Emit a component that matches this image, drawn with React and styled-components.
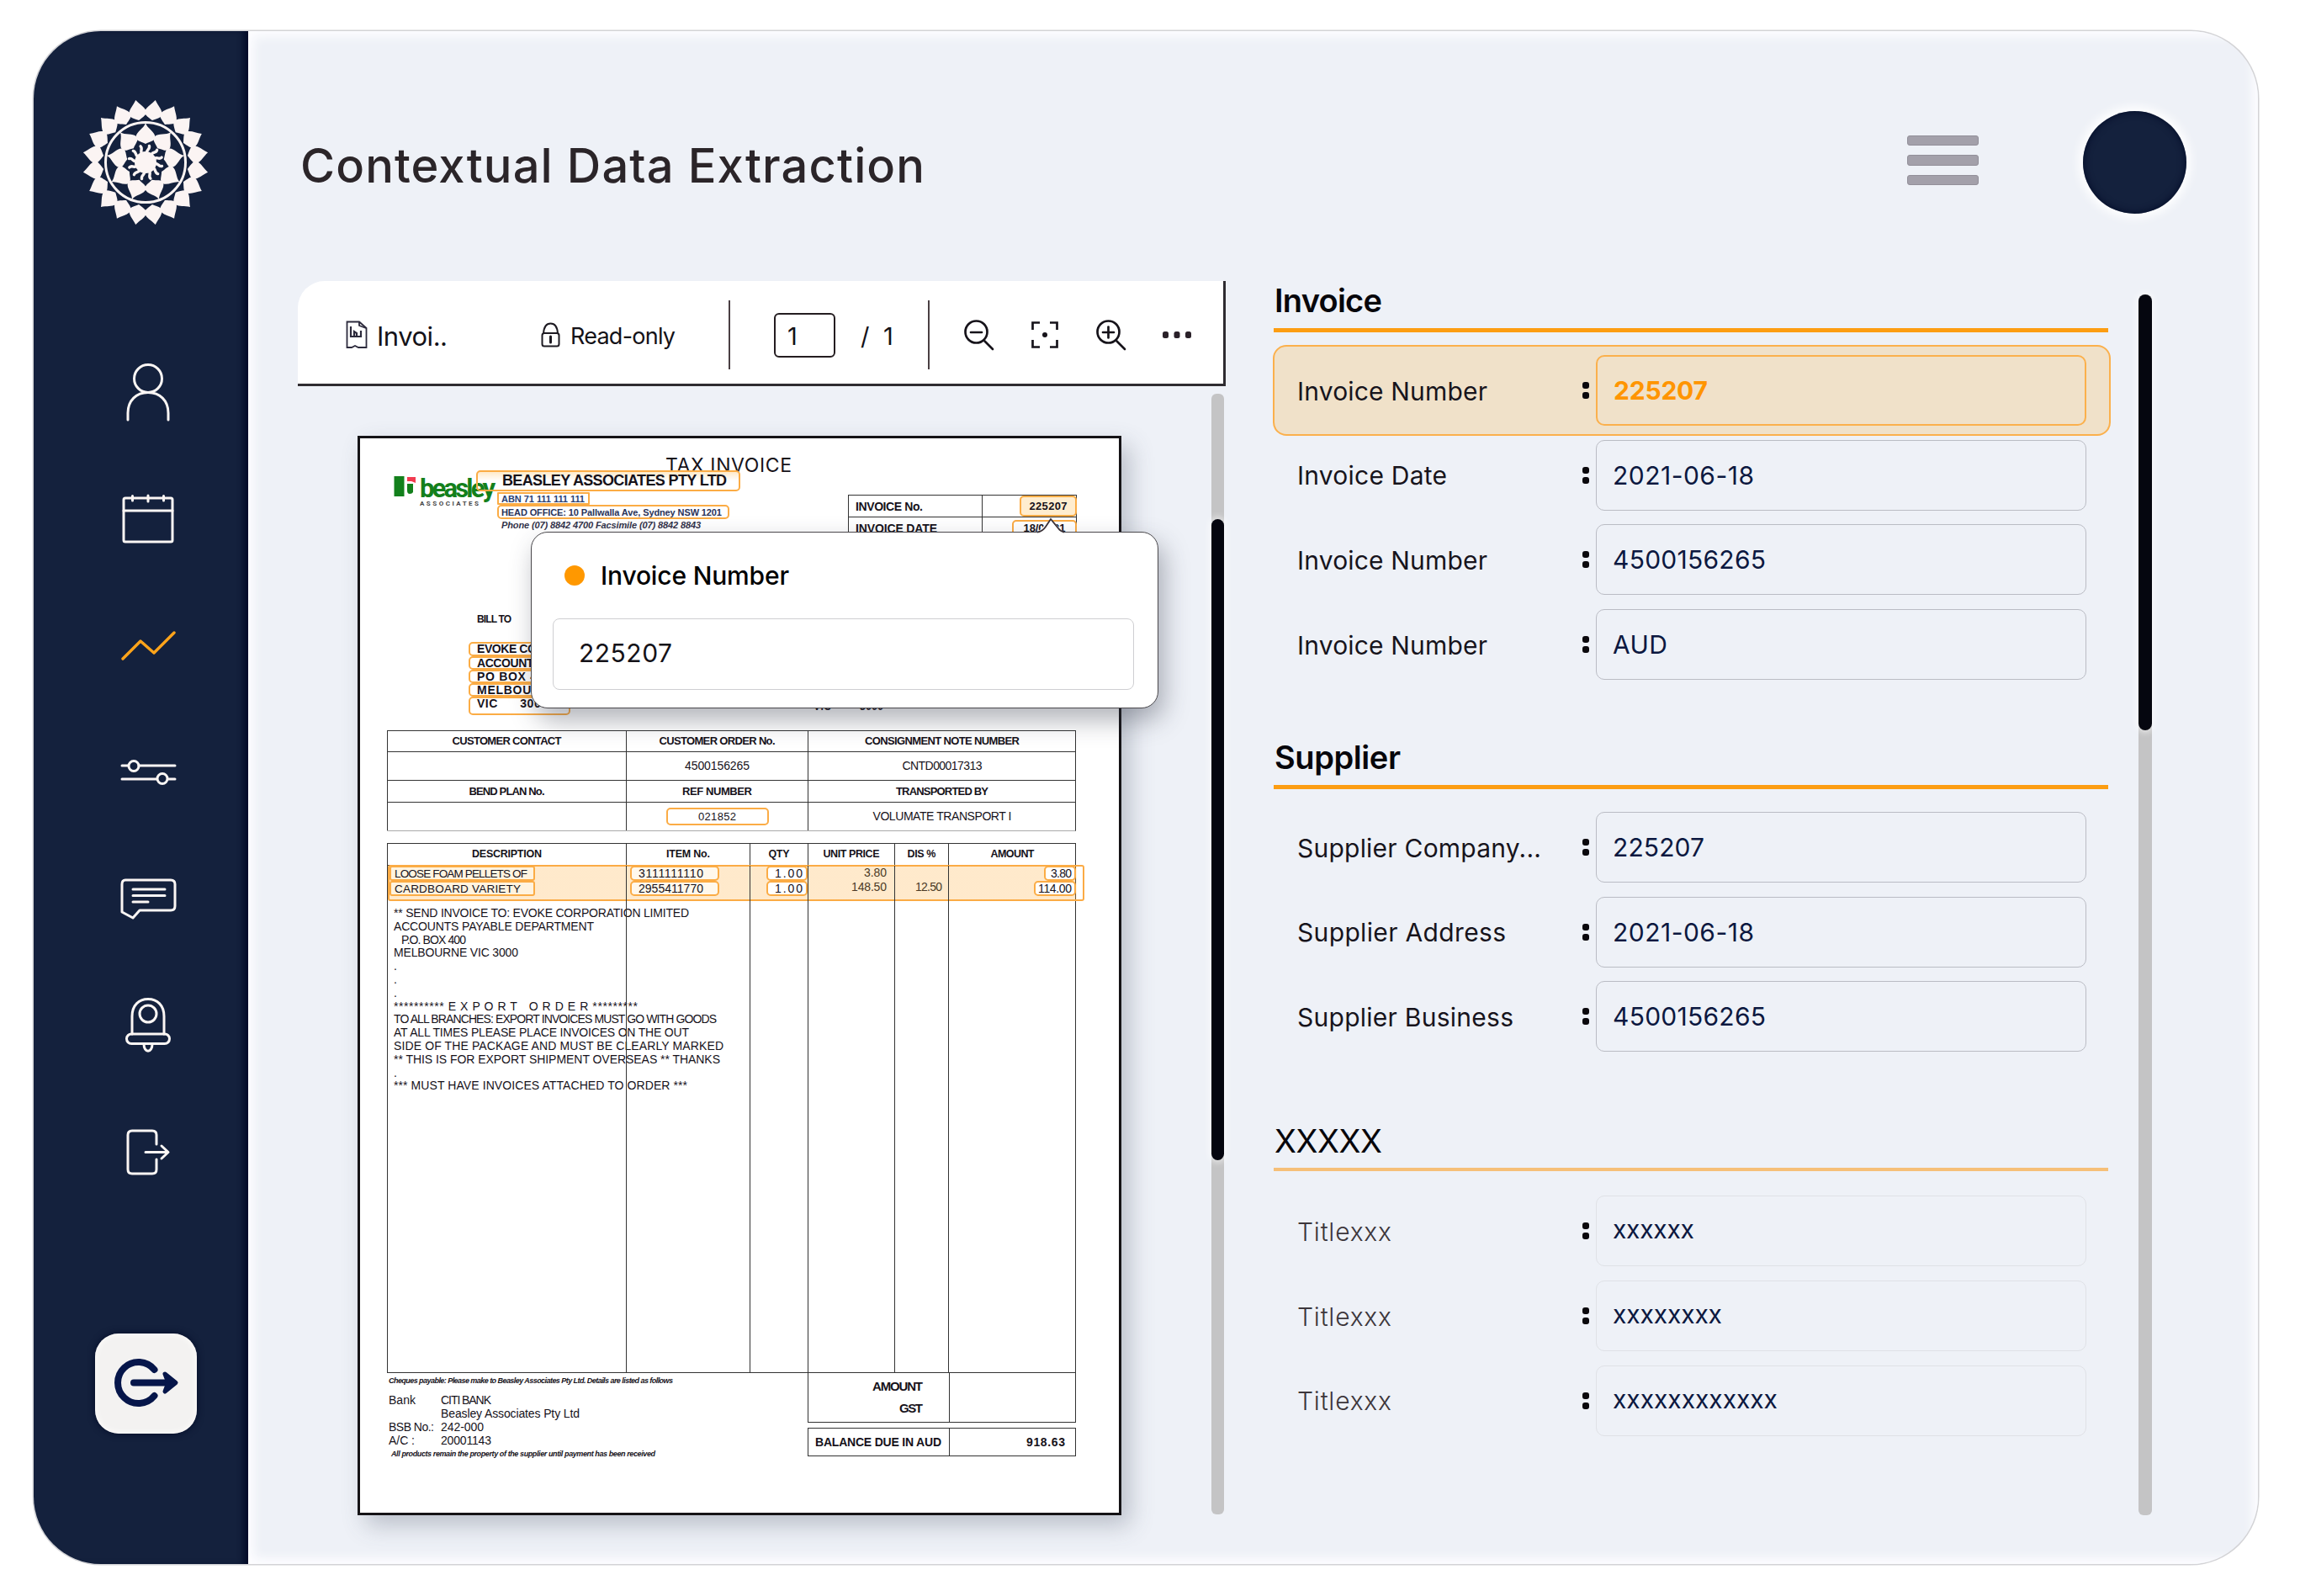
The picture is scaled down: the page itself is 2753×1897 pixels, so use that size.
import React, { useLayoutEffect, useRef, useState } from "react";
import styled, { createGlobalStyle, css } from "styled-components";

const NAVY = "#14213d";
const ORANGE = "#fc9d12";
const INK = "#141218";

const GlobalStyle = createGlobalStyle`
  * { box-sizing: border-box; }
  body { margin: 0; background: #fff; font-family: Inter, "Liberation Sans", sans-serif; color: ${INK}; }
  svg { display: block; overflow: visible; flex: none; }
`;

/* Text spread over a given width by letter spacing. */
const FitSpan = styled.span`
  display: inline-block;
  white-space: pre;
`;

function Fit({ w, children }) {
  const ref = useRef(null);
  const [gap, setGap] = useState(0);
  useLayoutEffect(() => {
    const el = ref.current;
    el.style.letterSpacing = "0px";
    const natural = el.getBoundingClientRect().width;
    const next = (w - natural) / Math.max(1, children.length - 1);
    el.style.letterSpacing = `${next}px`;
    setGap(next);
  }, [w, children]);
  return (
    <FitSpan ref={ref} style={{ letterSpacing: gap, marginRight: -gap }}>
      {children}
    </FitSpan>
  );
}

/* ---------- frame ---------- */
const Frame = styled.div`
  display: flex;
  width: 2644px;
  height: 1822px;
  margin: 37px 0 38px 40px;
  border-radius: 80px;
  overflow: hidden;
  background: #eef1f7;
  box-shadow: 0 0 0 1.5px #d3d3d6;
`;

const Sidebar = styled.aside`
  width: 255px;
  flex: none;
  background: ${NAVY};
  box-shadow: inset -8px 0 8px -3px #020a26;
  display: flex;
  flex-direction: column;
  padding-top: 82px;
`;

const LogoSlot = styled.div`
  height: 148px;
  padding-left: 59px;
`;

const Nav = styled.nav`
  display: flex;
  flex-direction: column;
  margin-top: 125px;
`;

const NavItem = styled.div`
  height: 150.4px;
  display: flex;
  align-items: center;
  padding-left: 100px;
`;

const ExitButton = styled.div`
  width: 121px;
  height: 119px;
  margin: 140px 0 0 73px;
  border-radius: 28px;
  background: #f3f2f1;
  box-shadow: inset 0 0 8px #fffdfb, 0 0 8px #040c28;
  display: flex;
  align-items: center;
  justify-content: center;
`;

const Main = styled.main`
  flex: 1;
  padding-left: 59px;
  box-shadow: inset 0 0 12px 7px #fdfdff;
`;

const Header = styled.header`
  height: 297px;
  padding-top: 14px;
  display: flex;
  align-items: center;
`;

const Title = styled.h1`
  margin: 0;
  padding: 8px 0 0 3px;
  width: 1913px;
  font-size: 56px;
  font-weight: 500;
  line-height: 70px;
  color: #2b2529;
`;

const Burger = styled.div`
  display: flex;
  flex-direction: column;
  gap: 11px;
  width: 85px;
  margin-top: -4px;
`;

const Bar = styled.i`
  height: 12.5px;
  border-radius: 3px;
  background: #a3a0aa;
  border: 1px solid #928f99;
`;

const Avatar = styled.div`
  width: 123px;
  height: 122px;
  margin-left: 124px;
  border-radius: 50%;
  background: ${NAVY};
  box-shadow: inset 0 0 10px #020a26, 0 0 12px 5px #fff;
`;

const Body = styled.div`
  display: flex;
  align-items: flex-start;
`;

/* ---------- viewer ---------- */
const Viewer = styled.section`
  width: 1103px;
  flex: none;
`;

const Toolbar = styled.div`
  height: 125px;
  display: flex;
  align-items: center;
  padding: 6px 0 0 57px;
  background: #fff;
  border-right: 3px solid #2f2c31;
  border-bottom: 3px solid #2f2c31;
  border-top-left-radius: 32px;
`;

const Tool = styled.div`
  display: flex;
  align-items: center;
  flex: none;
  gap: ${(p) => p.$gap || 0}px;
  width: ${(p) => p.$w}px;
  margin-left: ${(p) => p.$ml || 0}px;
`;

const ToolText = styled.div`
  padding-top: 3px;
  font-size: ${(p) => p.$size || 29}px;
  line-height: 36px;
`;

const Divider = styled.i`
  width: 2px;
  height: 82px;
  flex: none;
  margin-left: ${(p) => p.$ml}px;
  background: #4a3f43;
`;

const PageBox = styled.div`
  width: 73px;
  height: 53px;
  flex: none;
  margin-left: 52px;
  padding-left: 14px;
  border: 2px solid #241d20;
  border-radius: 6px;
  font-size: 29px;
  line-height: 52px;
`;

const Desk = styled.div`
  display: flex;
  align-items: flex-start;
`;

const Track = styled.div`
  width: ${(p) => p.$w}px;
  height: ${(p) => p.$h}px;
  flex: none;
  margin: ${(p) => p.$m};
  padding-top: ${(p) => p.$offset || 0}px;
  border-radius: 6px;
  background: #c4c4c5;
`;

const Thumb = styled.div`
  height: ${(p) => p.$h}px;
  border-radius: 8px;
  background: #05060f;
  box-shadow: 0 0 8px 2px rgba(255, 255, 255, 0.7);
`;

/* ---------- document ---------- */
const Paper = styled.article`
  position: relative;
  width: 908px;
  height: 1283px;
  margin: 59px 0 0 71px;
  padding: 20px 51px 0 32px;
  flex: none;
  border: 3px solid #151316;
  background: #fff;
  box-shadow: 10px 12px 26px rgba(70, 80, 100, 0.3);
  font-family: "Liberation Sans", sans-serif;
  font-size: 14px;
  color: #16121a;
`;

const DocTitle = styled.div`
  padding-left: 331px;
  height: 18px;
  font-family: Inter, sans-serif;
  font-size: 23px;
  line-height: 25px;
`;

const Letterhead = styled.div`
  display: flex;
  align-items: flex-start;
  height: 167px;
`;

const Brand = styled.div`
  width: 106px;
  padding: 6px 0 0 8px;
  display: flex;
  flex: none;
  white-space: nowrap;
`;

const BrandText = styled.div`
  padding-left: 3px;
  font-family: "Liberation Sans Narrow", Roboto, sans-serif;
  font-size: 31px;
  font-weight: 700;
  line-height: 31px;
  color: #13801c;
`;

const BrandSub = styled.div`
  margin-top: -2px;
  font-size: 8px;
  line-height: 9px;
  font-weight: 700;
  color: #444;
`;

const Company = styled.div`
  position: relative;
  width: 314px;
  flex: none;
`;

const Chip = styled.div`
  width: ${(p) => p.$w}px;
  height: ${(p) => p.$h || 17}px;
  margin: ${(p) => p.$m || 0};
  padding: 0 ${(p) => p.$pr || 0}px 0 ${(p) => p.$pl || 0}px;
  display: flex;
  align-items: ${(p) => (p.$top ? "flex-start" : "center")};
  line-height: ${(p) => (p.$top ? "13px" : "normal")};
  justify-content: ${(p) => p.$align || "flex-start"};
  border: 2px solid #fbac45;
  border-radius: ${(p) => p.$r || 5}px;
  background: ${(p) => p.$bg || "transparent"};
  color: ${(p) => p.$color || "inherit"};
  font-size: ${(p) => p.$size || 14}px;
  font-weight: ${(p) => p.$weight || 400};
`;

const SmallLine = styled.div`
  padding-left: 30px;
  margin-top: 1px;
  font-size: 11px;
  line-height: 13px;
  font-style: italic;
  font-weight: 700;
  color: #33334a;
`;

const Meta = styled.div`
  margin: 29px -1px 0 auto;
  width: 272px;
  display: grid;
  grid-template-columns: 159px 113px;
  grid-auto-rows: 26px;
  border-right: 1px solid #333;
  border-top: 1px solid #333;
`;

const MetaCell = styled.div`
  display: flex;
  align-items: center;
  justify-content: ${(p) => (p.$end ? "flex-end" : "flex-start")};
  padding-left: ${(p) => (p.$end ? 0 : 8)}px;
  border-left: 1px solid #333;
  border-bottom: 1px solid #333;
  font-weight: 700;
`;

const BillRow = styled.div`
  display: flex;
  height: 142px;
  padding-left: 97px;
`;

const BillTo = styled.div`
  width: 410px;
  flex: none;
  font-weight: 700;
`;

const BillLabel = styled.div`
  padding-left: 10px;
  height: 37px;
  font-size: 12px;
  line-height: 20px;
  font-weight: 700;
`;

const DeliverTo = styled.div`
  padding-top: 106px;
  line-height: 16px;
  font-weight: 700;
  font-size: 12px;
`;

const RefTable = styled.div`
  display: grid;
  grid-template-columns: 284px 216px 319px;
  grid-template-rows: 25px 34px 26px 34px;
  width: 819px;
  border-right: 1px solid #333;
  border-bottom: 1px solid #aaa;
`;

const RefCell = styled.div`
  display: flex;
  align-items: center;
  justify-content: center;
  padding-bottom: 1px;
  border-left: 1px solid #333;
  border-top: 1px solid #333;
  font-size: ${(p) => (p.$head ? 13 : 14)}px;
  font-weight: ${(p) => (p.$head ? 700 : 400)};
`;

const columns = css`
  display: grid;
  grid-template-columns: 284px 147px 69px 103px 64px 152px;
  width: 819px;
  border-right: 1px solid #333;
  border-top: 1px solid #333;
`;

const ItemHead = styled.div`
  ${columns}
  margin-top: 14px;
  height: 26px;
`;

const ItemHeadCell = styled.div`
  display: flex;
  align-items: center;
  justify-content: center;
  padding-bottom: 1px;
  border-left: 1px solid #333;
  font-size: 12.5px;
  font-weight: 700;
`;

const ItemBody = styled.div`
  ${columns}
  position: relative;
  height: 604px;
  border-bottom: 1px solid #333;
`;

const Band = styled.div`
  position: absolute;
  left: 1px;
  top: -1px;
  width: 828px;
  height: 43px;
  border: 2px solid #fbab45;
  border-radius: 3px;
  background: linear-gradient(90deg, rgba(255, 178, 70, 0.28) 816px, #fff 817px);
`;

const ItemCol = styled.div`
  position: relative;
  border-left: 1px solid #333;
  padding: 0 ${(p) => p.$pr || 0}px 0 ${(p) => p.$pl || 0}px;
  display: flex;
  flex-direction: column;
  align-items: ${(p) => (p.$end ? "flex-end" : "flex-start")};
`;

const Plain = styled.div`
  height: 17px;
  line-height: 17px;
  color: #4b3a26;
`;

const Notes = styled.div`
  padding: 13px 0 0 5px;
`;

const Note = styled.div`
  height: 15.8px;
  line-height: 15.8px;
  padding-left: ${(p) => p.$pl || 0}px;
`;

const Foot = styled.div`
  display: flex;
  justify-content: space-between;
`;

const Pay = styled.div`
  padding: 4px 0 0 2px;
`;

const PayRow = styled.div`
  display: grid;
  grid-template-columns: 62px auto;
  justify-items: start;
  height: 16px;
  line-height: 16px;
`;

const Tiny = styled.div`
  font-size: 9px;
  line-height: 10px;
  height: ${(p) => p.$h}px;
  padding: ${(p) => p.$pt || 0}px 0 0 ${(p) => p.$pl || 0}px;
  font-style: italic;
  font-weight: 700;
`;

const Totals = styled.div`
  width: 319px;
`;

const TotalBox = styled.div`
  display: grid;
  grid-template-columns: 167px 150px;
  height: ${(p) => p.$h}px;
  margin-top: ${(p) => p.$mt || 0}px;
  border: 1px solid #333;
  border-top-width: ${(p) => (p.$open ? 0 : 1)}px;
  font-weight: 700;
  font-size: ${(p) => (p.$open ? 15 : 14)}px;
`;

const TotalCell = styled.div`
  display: flex;
  flex-direction: column;
  align-items: flex-end;
  justify-content: center;
  gap: 9px;
  padding: 0 ${(p) => p.$pr}px 1px 0;
  border-left: ${(p) => (p.$line ? "1px solid #333" : "0")};
`;

/* ---------- popup ---------- */
const Popup = styled.div`
  position: absolute;
  left: 203px;
  top: 111px;
  width: 746px;
  height: 210px;
  padding: 0 25px;
  border: 1.5px solid #4a484c;
  border-radius: 20px;
  background: #fff;
  box-shadow: 6px 14px 30px rgba(50, 55, 70, 0.38);
  font-family: Inter, sans-serif;
  color: ${INK};
`;

const Caret = styled.svg`
  position: absolute;
  left: 600px;
  top: -18px;
`;

const PopupHead = styled.div`
  display: flex;
  align-items: center;
  height: 102px;
  font-size: 30px;
  font-weight: 500;
  color: #000;
`;

const Dot = styled.i`
  width: 24px;
  height: 24px;
  margin: 0 19px 0 14px;
  border-radius: 50%;
  background: #ff9800;
`;

const PopupInput = styled.div`
  width: 691px;
  height: 85px;
  padding-left: 30px;
  border: 1.5px solid #cfcfd2;
  border-radius: 8px;
  font-size: 30px;
  line-height: 80px;
`;

/* ---------- fields ---------- */
const Panel = styled.section`
  width: 996px;
  flex: none;
  margin-left: 56px;
`;

const Group = styled.div`
  margin-top: ${(p) => p.$mt}px;
`;

const GroupTitle = styled.h2`
  margin: 0;
  padding-left: 2px;
  font-size: 38px;
  font-weight: ${(p) => (p.$faded ? 400 : 600)};
  line-height: 47px;
  color: #07060b;
`;

const Rule = styled.div`
  height: ${(p) => (p.$faded ? 4 : 5)}px;
  margin: ${(p) => (p.$faded ? 8 : 9)}px 3px 0 1px;
  background: ${(p) => (p.$faded ? "#f6bf78" : ORANGE)};
`;

const Rows = styled.div`
  display: flex;
  flex-direction: column;
  gap: 16.7px;
  padding-top: ${(p) => (p.$faded ? 29 : 27)}px;
`;

const Row = styled.div`
  display: flex;
  align-items: center;
  height: 84px;
  padding-left: 29px;
  border: 0 solid #fbb04c;
  ${(p) =>
    p.$active &&
    css`
      height: 108px;
      margin: -12px 0;
      padding-left: 27px;
      border-width: 2px;
      border-radius: 16px;
      background: #f0e1c9;
    `}
`;

const Label = styled.div`
  width: 339px;
  padding-top: 1px;
  font-size: 30px;
  font-weight: ${(p) => (p.$faded ? 300 : 400)};
  color: ${(p) => (p.$faded ? "#3c363b" : "#17141c")};
`;

const Colon = styled.div`
  width: 16px;
  display: flex;
  flex-direction: column;
  gap: 4px;
  &::before,
  &::after {
    content: "";
    width: 8px;
    height: 8px;
    border-radius: 3px;
    background: #0b090d;
  }
`;

const Value = styled.div`
  width: 583px;
  height: 84px;
  padding-left: 19px;
  border: ${(p) => (p.$active ? 2.5 : 1.5)}px solid ${(p) => (p.$active ? "#fbb04c" : p.$faded ? "#dfe1e6" : "#babcc4")};
  border-radius: 10px;
  font-size: 30px;
  font-weight: ${(p) => (p.$active ? 700 : 400)};
  line-height: ${(p) => (p.$faded ? 79 : p.$active ? 80 : 82)}px;
  color: ${(p) => (p.$active ? "#ff9500" : "#0c1840")};
`;

/* ---------- icons ---------- */
const spin = (count, offset) => Array.from({ length: count }, (_, i) => offset + (360 / count) * i);

function Mandala() {
  return (
    <svg width="148" height="148" viewBox="-74 -74 148 148" fill="#fbf4f3">
      {spin(20, 9).map((a) => (
        <path key={a} transform={`rotate(${a})`} d="M0-75C4-69 9-66 10.500-60C11-56 6-54 0-50.500C-6-54-11-56-10.500-60C-9-66-4-69 0-75Z" />
      ))}
      <circle r="47.500" fill="none" stroke="#fbf4f3" strokeWidth="3" />
      {spin(9, 0).map((a) => (
        <path key={a} transform={`rotate(${a})`} d="M0-47C2-40 11-37 11.500-30C11-25 5-25 0-22C-5-25-11-25-11.500-30C-11-37-2-40 0-47Z" />
      ))}
      <circle r="13" />
      {spin(12, 10).map((a) => (
        <path key={a} transform={`rotate(${a})`} d="M0-11C-3-14 3-16 1-20" fill="none" stroke="#fbf4f3" strokeWidth="3.4" strokeLinecap="round" />
      ))}
    </svg>
  );
}

const NavSvg = ({ children, color = "#fbf6f4", w = 3 }) => (
  <svg width="72" height="72" viewBox="0 0 72 72" fill="none" stroke={color} strokeWidth={w} strokeLinecap="round" strokeLinejoin="round">
    {children}
  </svg>
);

const navIcons = [
  <NavSvg key="user">
    <circle cx="36" cy="19" r="16.5" />
    <path d="M12 68V60C12 45 22 35.500 36 35.500S60 45 60 60V68" />
  </NavSvg>,
  <NavSvg key="calendar">
    <rect x="7" y="10" width="58" height="52" rx="2" />
    <path d="M7 25H65M17.500 7.500V13M36 7V14M54.500 7.500V13" />
  </NavSvg>,
  <NavSvg key="trend" color="#ffa41a" w={3.4}>
    <path d="M6 51L27 30L43 44L67 20" />
  </NavSvg>,
  <NavSvg key="sliders">
    <path d="M5 28H12.500M25 28H68M5 44H46M60 44H68" />
    <circle cx="19" cy="28.500" r="6" />
    <circle cx="53" cy="43.500" r="6" />
  </NavSvg>,
  <NavSvg key="message">
    <path d="M9 13H63Q68 13 68 18V44Q68 49 63 49H26L18 58L5 51V18Q5 13 9 13Z" />
    <path d="M18 24H56M18 31.500H56M18 39H36" />
  </NavSvg>,
  <NavSvg key="bell">
    <path d="M17 46V25C17 12 25 4.500 36 4.500S55 12 55 25V46" />
    <circle cx="36" cy="22" r="10" />
    <rect x="10.500" y="46" width="51" height="11.500" rx="5.700" />
    <path d="M31 58C31 69 41 69 41 58" />
  </NavSvg>,
  <NavSvg key="leave">
    <path d="M46 26V15Q46 10 41 10H17Q12 10 12 15V56Q12 61 17 61H41Q46 61 46 56V44" />
    <path d="M33 35.500H59M52 28L60 35.500L52 43" />
  </NavSvg>,
];

const ExitIcon = () => (
  <svg width="80" height="60" viewBox="0 0 80 60" fill="none" stroke="#06164a" strokeWidth="8" strokeLinecap="round">
    <path d="M49.500 14A24.500 24.500 0 1 0 49.500 45" />
    <path d="M25 29.500H66" />
    <path d="M62 19L75 29.500L62 40L66 29.500Z" fill="#06164a" strokeWidth="5" strokeLinejoin="round" />
  </svg>
);

const FileIcon = () => (
  <svg width="26" height="34" viewBox="0 0 26 34" fill="none" stroke="#2c2a3c" strokeWidth="1.8">
    <path d="M1.500 1.500H16L24.500 9V32H15L11 30L7 32H1.500Z" />
    <path d="M16 1.500V6L24 9" />
    <path d="M6 7V19H18V12M10 18V13L13 15V18" strokeWidth="2.200" />
  </svg>
);

const LockIcon = () => (
  <svg width="23" height="30" viewBox="0 0 23 30" fill="none" stroke="#1d1a22" strokeWidth="2">
    <path d="M3 13.500C3.500 5 7 1.500 11.500 1.500S19.500 5 20 13.500" />
    <rect x="1.500" y="13" width="20" height="15.500" rx="2.500" />
    <path d="M11.500 17V24" strokeWidth="3" strokeLinecap="round" />
  </svg>
);

const ZoomIcon = ({ plus }) => (
  <svg width="36" height="36" viewBox="0 0 36 36" fill="none" stroke="#16131a" strokeWidth="2.700" strokeLinecap="round">
    <circle cx="14.500" cy="14.500" r="13" />
    <path d="M8 15H21M24.500 25.500L34 35" />
    {plus && <path d="M14.500 8.500V21.500" />}
  </svg>
);

const FocusIcon = () => (
  <svg width="32" height="32" viewBox="0 0 32 32" fill="none" stroke="#16131a" strokeWidth="2.700">
    <path d="M1.500 10V1.500H10M22 1.500H30.500V10M30.500 22V30.500H22M10 30.500H1.500V22" />
    <circle cx="16" cy="16" r="3" fill="#16131a" stroke="none" />
  </svg>
);

const MoreIcon = () => (
  <svg width="34" height="8" viewBox="0 0 34 8" fill="#2a2129">
    <rect width="7" height="8" rx="2.500" />
    <rect x="13.500" width="7" height="8" rx="2.500" />
    <rect x="27" width="7" height="8" rx="2.500" />
  </svg>
);

const BrandMark = () => (
  <svg width="28" height="26" viewBox="0 0 28 26">
    <rect x="0.500" y="1" width="12" height="24" fill="#13801c" />
    <path d="M16 2H26V9L21 7H16Z" fill="#f23b50" />
    <path d="M16 10H23V20Q22 22 19 22Q16 22 16 18Z" fill="#13801c" />
  </svg>
);

/* ---------- data ---------- */
const groups = [
  {
    title: "Invoice", tw: 128, mt: 0,
    rows: [
      { label: "Invoice Number", lw: 226, value: "225207", vw: 112, active: true },
      { label: "Invoice Date", lw: 178, value: "2021-06-18", vw: 168 },
      { label: "Invoice Number", lw: 226, value: "4500156265", vw: 182 },
      { label: "Invoice Number", lw: 226, value: "AUD", vw: 65 },
    ],
  },
  {
    title: "Supplier", tw: 150, mt: 69,
    rows: [
      { label: "Supplier Company...", lw: 290, value: "225207", vw: 109 },
      { label: "Supplier Address", lw: 248, value: "2021-06-18", vw: 168 },
      { label: "Supplier Business", lw: 257, value: "4500156265", vw: 182 },
    ],
  },
  {
    title: "XXXXX", tw: 128, mt: 83, faded: true,
    rows: [
      { label: "Titlexxx", lw: 112, value: "xxxxxx", vw: 97 },
      { label: "Titlexxx", lw: 112, value: "xxxxxxxx", vw: 130 },
      { label: "Titlexxx", lw: 112, value: "xxxxxxxxxxxx", vw: 196 },
    ],
  },
];

const refCells = [
  ["CUSTOMER CONTACT", 130, true], ["CUSTOMER ORDER No.", 138, true], ["CONSIGNMENT NOTE NUMBER", 184, true],
  null, ["4500156265", 77], ["CNTD00017313", 95],
  ["BEND PLAN No.", 90, true], ["REF NUMBER", 83, true], ["TRANSPORTED BY", 110, true],
  null, ["021852", 45, false, true], ["VOLUMATE TRANSPORT I", 165],
];

const itemHeads = [["DESCRIPTION", 83], ["ITEM No.", 52], ["QTY", 25], ["UNIT PRICE", 67], ["DIS %", 34], ["AMOUNT", 52]];

const notes = [
  ["** SEND INVOICE TO: EVOKE CORPORATION LIMITED", 351],
  ["ACCOUNTS PAYABLE DEPARTMENT", 238],
  ["P.O. BOX 400", 77, 9],
  ["MELBOURNE VIC 3000", 148],
  ["."], ["."], ["."],
  ["********** E X P O R T   O R D E R *********", 290],
  ["TO ALL BRANCHES: EXPORT INVOICES MUST GO WITH GOODS", 384],
  ["AT ALL TIMES PLEASE PLACE INVOICES ON THE OUT", 351],
  ["SIDE OF THE PACKAGE AND MUST BE CLEARLY MARKED", 392],
  ["** THIS IS FOR EXPORT SHIPMENT OVERSEAS ** THANKS", 388],
  ["."],
  ["*** MUST HAVE INVOICES ATTACHED TO ORDER ***", 349],
];

const billLines = [["EVOKE CORPORATION", 150, 17], ["ACCOUNTS PAYABLE", 140, 16], ["PO BOX 400", 88, 16], ["MELBOURNE", 96, 16], ["VIC      3000", 84, 22]];

function Invoice() {
  return (
    <Paper>
      <DocTitle><Fit w={150}>TAX INVOICE</Fit></DocTitle>
      <Letterhead>
        <Brand>
          <BrandMark />
          <BrandText>
            <Fit w={90}>beasley</Fit>
            <BrandSub><Fit w={70}>ASSOCIATES</Fit></BrandSub>
          </BrandText>
        </Brand>
        <Company>
          <Chip $w={314} $h={25} $pl={29} $size={18} $weight={700} $bg="linear-gradient(rgba(255, 190, 90, 0.32), rgba(255, 255, 255, 0) 50%)">
            <Fit w={267}>BEASLEY ASSOCIATES PTY LTD</Fit>
          </Chip>
          <Chip $w={110} $h={15} $m="1px 0 0 25px" $pl={3} $r={1} $size={11} $weight={700} $color="#2b4274">
            <Fit w={99}>ABN 71 111 111 111</Fit>
          </Chip>
          <Chip $w={276} $h={17} $m="0 0 0 25px" $pl={3} $size={11} $weight={700} $color="#2b3358">
            <Fit w={262}>HEAD OFFICE: 10 Pallwalla Ave, Sydney NSW 1201</Fit>
          </Chip>
          <SmallLine><Fit w={237}>Phone (07) 8842 4700 Facsimile (07) 8842 8843</Fit></SmallLine>
        </Company>
        <Meta>
          <MetaCell><Fit w={80}>INVOICE No.</Fit></MetaCell>
          <MetaCell $end>
            <Chip $w={68} $h={25} $align="center" $bg="#ffedcf" $size={13} $weight={700}><Fit w={45}>225207</Fit></Chip>
          </MetaCell>
          <MetaCell><Fit w={97}>INVOICE DATE</Fit></MetaCell>
          <MetaCell $end>
            <Chip $w={77} $h={20} $align="center" $size={13} $weight={700}><Fit w={50}>18/06/21</Fit></Chip>
          </MetaCell>
        </Meta>
      </Letterhead>
      <BillRow>
        <BillTo>
          <BillLabel><Fit w={41}>BILL TO</Fit></BillLabel>
          {billLines.map(([t, w, h], i) => (
            <Chip key={t} $w={i === 4 ? 121 : 170} $h={h} $pl={8} $weight={700} $top><Fit w={w}>{t}</Fit></Chip>
          ))}
        </BillTo>
        <DeliverTo><Fit w={83}>VIC         3000</Fit></DeliverTo>
      </BillRow>
      <RefTable>
        {refCells.map((c, i) => (
          <RefCell key={i} $head={c && c[2]}>
            {c && (c[3]
              ? <Chip $w={122} $h={21} $align="center" $size={13}><Fit w={c[1]}>{c[0]}</Fit></Chip>
              : <Fit w={c[1]}>{c[0]}</Fit>)}
          </RefCell>
        ))}
      </RefTable>
      <ItemHead>
        {itemHeads.map(([t, w]) => <ItemHeadCell key={t}><Fit w={w}>{t}</Fit></ItemHeadCell>)}
      </ItemHead>
      <ItemBody>
        <Band />
        <ItemCol $pl={2}>
          <Chip $w={173} $h={18} $pl={4} $r={3} $bg="#fff3df" $size={13.5}><Fit w={158}>LOOSE FOAM PELLETS OF</Fit></Chip>
          <Chip $w={173} $h={18} $pl={4} $r={3} $bg="#fff3df" $size={13.5}><Fit w={150}>CARDBOARD VARIETY</Fit></Chip>
          <Notes>
            {notes.map(([t, w, pl], i) => (
              <Note key={i} $pl={pl}>{w ? <Fit w={w}>{t}</Fit> : t}</Note>
            ))}
          </Notes>
        </ItemCol>
        <ItemCol $pl={4}>
          <Chip $w={106} $h={18} $pl={8} $bg="#fff8ec"><Fit w={77}>3111111110</Fit></Chip>
          <Chip $w={106} $h={18} $pl={8} $bg="#fff8ec"><Fit w={77}>2955411770</Fit></Chip>
        </ItemCol>
        <ItemCol $end>
          <Chip $w={49} $h={18} $pr={4} $align="flex-end" $bg="#fff"><Fit w={33}>1.00</Fit></Chip>
          <Chip $w={49} $h={18} $pr={4} $align="flex-end" $bg="#fff"><Fit w={33}>1.00</Fit></Chip>
        </ItemCol>
        <ItemCol $end $pr={9}>
          <Plain><Fit w={27}>3.80</Fit></Plain>
          <Plain><Fit w={42}>148.50</Fit></Plain>
        </ItemCol>
        <ItemCol $end $pr={7}>
          <Plain />
          <Plain><Fit w={32}>12.50</Fit></Plain>
        </ItemCol>
        <ItemCol $end>
          <Chip $w={38} $h={18} $pr={3} $align="flex-end" $bg="#fff"><Fit w={25}>3.80</Fit></Chip>
          <Chip $w={50} $h={18} $pr={3} $align="flex-end" $bg="#fff"><Fit w={40}>114.00</Fit></Chip>
        </ItemCol>
      </ItemBody>
      <Foot>
        <Pay>
          <Tiny $h={20}><Fit w={338}>Cheques payable: Please make to Beasley Associates Pty Ltd. Details are listed as follows</Fit></Tiny>
          <PayRow><Fit w={32}>Bank</Fit><Fit w={60}>CITI BANK</Fit></PayRow>
          <PayRow><span /><Fit w={165}>Beasley Associates Pty Ltd</Fit></PayRow>
          <PayRow><Fit w={54}>BSB No.:</Fit><Fit w={51}>242-000</Fit></PayRow>
          <PayRow><Fit w={31}>A/C :</Fit><Fit w={60}>20001143</Fit></PayRow>
          <Tiny $h={15} $pt={3} $pl={3}><Fit w={314}>All products remain the property of the supplier until payment has been received</Fit></Tiny>
        </Pay>
        <Totals>
          <TotalBox $h={59} $open>
            <TotalCell $pr={31}><Fit w={60}>AMOUNT</Fit><Fit w={28}>GST</Fit></TotalCell>
            <TotalCell $line />
          </TotalBox>
          <TotalBox $h={34} $mt={6}>
            <TotalCell $pr={9}><Fit w={150}>BALANCE DUE IN AUD</Fit></TotalCell>
            <TotalCell $line $pr={12}><Fit w={46}>918.63</Fit></TotalCell>
          </TotalBox>
        </Totals>
      </Foot>
      <Popup>
        <Caret width="34" height="20" viewBox="0 0 34 20">
          <path d="M0 19L17 2L34 19Z" fill="#fff" />
          <path d="M1 17.500Q7 17 11 11L17 2L26 13Q29 17 33 17.500" fill="none" stroke="#3a3238" strokeWidth="1.800" />
        </Caret>
        <PopupHead><Dot /><Fit w={224}>Invoice Number</Fit></PopupHead>
        <PopupInput><Fit w={111}>225207</Fit></PopupInput>
      </Popup>
    </Paper>
  );
}

export default function App() {
  return (
    <>
      <GlobalStyle />
      <Frame>
        <Sidebar>
          <LogoSlot><Mandala /></LogoSlot>
          <Nav>{navIcons.map((icon) => <NavItem key={icon.key}>{icon}</NavItem>)}</Nav>
          <ExitButton><ExitIcon /></ExitButton>
        </Sidebar>
        <Main>
          <Header>
            <Title><Fit w={742}>Contextual Data Extraction</Fit></Title>
            <Burger><Bar /><Bar /><Bar /></Burger>
            <Avatar />
          </Header>
          <Body>
            <Viewer>
              <Toolbar>
                <Tool $w={120} $gap={11}><FileIcon /><ToolText $size={31}><Fit w={84}>Invoi..</Fit></ToolText></Tool>
                <Tool $w={160} $gap={12} $ml={112}><LockIcon /><ToolText $size={27}><Fit w={125}>Read-only</Fit></ToolText></Tool>
                <Divider $ml={63} />
                <PageBox>1</PageBox>
                <Tool $w={12} $ml={30}><ToolText>/</ToolText></Tool>
                <Tool $w={12} $ml={15}><ToolText>1</ToolText></Tool>
                <Divider $ml={41} />
                <Tool $w={36} $ml={41}><ZoomIcon /></Tool>
                <Tool $w={32} $ml={44}><FocusIcon /></Tool>
                <Tool $w={36} $ml={45}><ZoomIcon plus /></Tool>
                <Tool $w={34} $ml={43}><MoreIcon /></Tool>
              </Toolbar>
              <Desk>
                <Invoice />
                <Track $w={15} $h={1332} $m="9px 0 0 107px" $offset={149}><Thumb $h={762} /></Track>
              </Desk>
            </Viewer>
            <Panel>
              {groups.map((g) => (
                <Group key={g.title} $mt={g.mt}>
                  <GroupTitle $faded={g.faded}><Fit w={g.tw}>{g.title}</Fit></GroupTitle>
                  <Rule $faded={g.faded} />
                  <Rows $faded={g.faded}>
                    {g.rows.map((r, i) => (
                      <Row key={i} $active={r.active}>
                        <Label $faded={g.faded}><Fit w={r.lw}>{r.label}</Fit></Label>
                        <Colon />
                        <Value $active={r.active} $faded={g.faded}><Fit w={r.vw}>{r.value}</Fit></Value>
                      </Row>
                    ))}
                  </Rows>
                </Group>
              ))}
            </Panel>
            <Track $w={16} $h={1451} $m="16px 0 0 33px"><Thumb $h={518} /></Track>
          </Body>
        </Main>
      </Frame>
    </>
  );
}
